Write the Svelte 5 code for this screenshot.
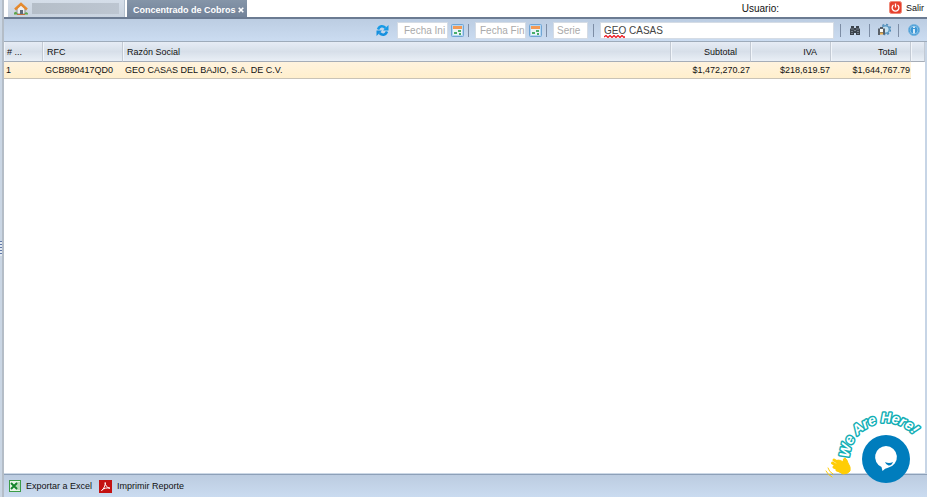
<script>
  let start = $state('');
  let end = $state('');
  let series = $state('');
  let query = $state('GEO CASAS');
  const rows = [
    { n: 1, rfc: 'GCB890417QD0', name: 'GEO CASAS DEL BAJIO, S.A. DE C.V.', subtotal: '$1,472,270.27', iva: '$218,619.57', total: '$1,644,767.79' }
  ];
</script>

{#snippet calendar()}
  <svg width="13" height="13" viewBox="0 0 13 13" aria-hidden="true">
    <rect x=".5" y=".5" width="12" height="12" rx="1" fill="#b5d6f2" stroke="#70a5d4" />
    <path d="M2 3h9v8H2z" fill="#eaf4f8" />
    <path d="M2 2h9v3H2z" fill="#f39a55" />
    <path d="M7 6h3v2H7zM3 8h3v2H3zM8 9h2v2H8z" fill="#48ad69" />
  </svg>
{/snippet}

<div class="app">
  <div class="splitter" role="separator" aria-orientation="vertical"><i></i></div>
  <div class="main">
    <header>
      <nav>
        <a class="tab home" href="#inicio" aria-label="Inicio">
          <svg width="14" height="13" viewBox="0 0 14 13" aria-hidden="true">
            <path d="M3 6v6h8V6L7 3z" fill="#eef0f2" stroke="#858b91" />
            <path d="M6 8h3v4H6z" fill="#5d6b79" />
            <path d="M1 7.500 7 2l6 5.500" fill="none" stroke="#e58a2e" stroke-width="2.400" />
            <path d="M0 11q2-3 4 1.500H0zM10 12.500q2-4 4-1v1z" fill="#5da548" />
            <path d="M3 12.500h8" stroke="#c4703c" />
          </svg>
          <span class="masked"></span>
        </a>
        <div class="tab active">
          <span>Concentrado de Cobros</span>
          <button aria-label="Cerrar">
            <svg width="6" height="6" viewBox="0 0 6 6" aria-hidden="true"><path d="m.7.7 4.600 4.600m0-4.600L.7 5.300" stroke="#fff" stroke-width="1.600" /></svg>
          </button>
        </div>
      </nav>
      <span class="user">Usuario:</span>
      <button class="logout">
        <svg width="13" height="13" viewBox="0 0 13 13" aria-hidden="true">
          <rect x=".5" y=".5" width="12" height="12" rx="2" fill="#e6402d" stroke="#ef8a7a" />
          <path d="M4.500 4a3.400 3.400 0 1 0 4 0M6.500 2.500v4" fill="none" stroke="#fff" stroke-width="1.300" />
        </svg>
        Salir
      </button>
    </header>

    <form class="toolbar" onsubmit={(e) => e.preventDefault()}>
      <button type="button" class="refresh" aria-label="Actualizar">
        <svg width="13" height="13" viewBox="0 0 13 13" aria-hidden="true">
          <path d="M2 5.500C3.500 1.500 7 1.500 9.500 4" fill="none" stroke="#169ae6" stroke-width="2.500" />
          <path d="M12.500 1v5.500H7z" fill="#169ae6" />
          <path d="M11 7.500C9.500 11.500 6 11.500 3.500 9" fill="none" stroke="#1590df" stroke-width="2.500" />
          <path d="M.5 12V6.500H6z" fill="#1590df" />
        </svg>
      </button>
      <input class="date" aria-label="Fecha inicial" placeholder="Fecha Ini" bind:value={start} />
      <button type="button" class="cal" aria-label="Elegir fecha inicial">{@render calendar()}</button>
      <i class="sep"></i>
      <input class="date" aria-label="Fecha final" placeholder="Fecha Fin" bind:value={end} />
      <button type="button" class="cal" aria-label="Elegir fecha final">{@render calendar()}</button>
      <i class="sep"></i>
      <input class="series" aria-label="Serie" placeholder="Serie" bind:value={series} />
      <i class="sep"></i>
      <div class="search">
        <input aria-label="Buscar" bind:value={query} spellcheck="false" />
        <svg class="squiggle" width="21" height="3" viewBox="0 0 21 3" aria-hidden="true"><path d="m0 2 2-1.500 2 2 2-2 2 2 2-2 2 2 2-2 2 2 2-2 2 2 1-1" fill="none" stroke="#ee1c24" stroke-width="1.300" /></svg>
      </div>
      <div class="tools">
        <button aria-label="Buscar">
          <svg width="12" height="12" viewBox="0 0 12 12" aria-hidden="true">
            <path d="M2 2h3v2h2V2h3v2l1 1v6H7V9H5v2H1V5l1-1z" fill="#3b434c" />
            <path d="M2 5h3m2 0h3M2 7.500h2m4 0h2M2 9.500h2m4 0h2M5 6.500h2" stroke="#8f9aa6" stroke-width=".7" />
          </svg>
        </button>
        <button type="button" aria-label="Configurar">
          <svg width="14" height="14" viewBox="0 0 14 14" aria-hidden="true">
            <circle cx="8.500" cy="6.500" r="5" fill="none" stroke="#4e8cb7" stroke-width="1.500" stroke-dasharray="2 1.930" />
            <circle cx="8.500" cy="6.500" r="3.800" fill="#c3e0f1" stroke="#5f9bc4" stroke-width="1.500" />
            <path d="M1 5.500h2V4h3v1.500h2v6H6V10H3v2H1z" fill="#596069" />
            <path d="M3 6h3v3H3z" fill="#f8faf7" />
            <path d="M3 9.500h3v2H3z" fill="#e8ad4e" />
          </svg>
        </button>
        <button type="button" aria-label="Información">
          <svg width="12" height="12" viewBox="0 0 12 12" aria-hidden="true">
            <circle cx="6" cy="6" r="5.500" fill="#3d97d5" stroke="#79b5df" />
            <circle cx="6" cy="6" r="4" fill="none" stroke="#b5daf2" stroke-width=".6" />
            <path d="M6 2.500V4M6 5v4.500" stroke="#fff" stroke-width="1.600" />
          </svg>
        </button>
      </div>
    </form>

    <main>
      <table>
        <colgroup><col class="num" /><col class="money" /><col /><col class="money" /><col class="money" /><col class="money" /><col class="tail" /></colgroup>
        <thead>
          <tr><th># ...</th><th>RFC</th><th>Razón Social</th><th class="r">Subtotal</th><th class="r">IVA</th><th class="r">Total</th><th></th></tr>
        </thead>
        <tbody>
          {#each rows as row}
            <tr><td>{row.n}</td><td>{row.rfc}</td><td>{row.name}</td><td class="r">{row.subtotal}</td><td class="r">{row.iva}</td><td class="r">{row.total}</td><td class="blank"></td></tr>
          {/each}
        </tbody>
      </table>
    </main>

    <footer>
      <button>
        <svg width="12" height="12" viewBox="0 0 12 12" aria-hidden="true">
          <rect x=".5" y=".5" width="11" height="11" fill="#e9f5e8" stroke="#3b9c48" />
          <path d="M7 3h4M7 5h4M7 7h4M7 9h4" stroke="#86bd8a" />
          <path d="m2 3 6 6M8 3 2 9" stroke="#16852d" stroke-width="2" />
        </svg>
        Exportar a Excel
      </button>
      <button>
        <svg width="13" height="13" viewBox="0 0 13 13" aria-hidden="true">
          <path d="M0 0h13v13H0z" fill="#c41212" />
          <path d="M2.500 10.500C5 9 6.500 5 6.200 2.500 6 5 8 8 11 8.200 8 7.500 5 8 2.500 10.500z" fill="none" stroke="#fff" />
        </svg>
        Imprimir Reporte
      </button>
    </footer>
  </div>

  <button class="chat" aria-label="Abrir chat">
    <svg width="104" height="80" viewBox="0 0 104 80" aria-hidden="true">
      <defs><path id="arc" d="M25 54A37 37 0 0 1 99 57" /></defs>
      <text><textPath href="#arc">We Are Here!</textPath></text>
      <g fill="none" stroke="#ffcd05" stroke-linecap="round">
        <path d="M10 56l8 5M8.500 59l8 5M10 63l7 3M13 66l6 2" stroke-width="3" />
        <path d="M14 56q3 0 5 2 0-4 2-4 2 1 3 5 3 4 2 8-2 3-7 3-5-2-7-6z" fill="#ffcd05" />
        <path d="M4 64q1 4 5 6M2 67q2 4 6 6" />
      </g>
      <circle cx="62" cy="55" r="24" fill="#007dbd" />
      <path d="M62 42a11 11 0 0 1 2 21.800q-3 .5-5.500 3.200l-1-4A11 11 0 0 1 62 42z" fill="#fff" />
      <path d="M61 58q4 2 8 0-1.500 4-4.500 3.500Q62 61 61 58z" fill="#007dbd" />
    </svg>
  </button>
</div>

<style>
  :global(body) { margin: 0; }
  .app { display: flex; min-height: 100vh; position: relative; background: #fff; color: #111; font: 9px/12px "Liberation Sans", Arial, sans-serif; }
  button { border: 0; padding: 0; background: none; font: inherit; color: inherit; display: flex; align-items: center; }
  svg { display: block; flex: none; }
  input { box-sizing: border-box; border: 1px solid #d5dce5; background: #fff; font: 10px/12px "Liberation Sans", Arial, sans-serif; color: #444; height: 17px; min-width: 0; outline: 0; }
  input::placeholder { color: #aaa; opacity: 1; }
  .splitter { width: 4px; box-sizing: border-box; flex: none; display: flex; align-items: center; background: #cad6e4; border-right: 2px solid #b4bdc7; }
  .splitter i { width: 2px; height: 15px; background: repeating-linear-gradient(#5f78a8 0 1px, #e4ebf3 1px 3px); }
  .main { flex: 1; min-width: 0; display: flex; flex-direction: column; }
  header { height: 17px; display: flex; align-items: center; padding-right: 3px; border-bottom: 2px solid #6b7b92; }
  nav { flex: 1; display: flex; gap: 2px; padding-left: 4px; }
  .tab { height: 17px; display: flex; align-items: center; box-sizing: border-box; background: linear-gradient(#d5dee9, #c9d3df); }
  .home { width: 117px; padding-left: 6px; gap: 4px; border-right: 1px solid #b2bfcd; }
  .masked { width: 87px; height: 11px; background: linear-gradient(90deg, #b5bec8, #bdc6d1); }
  .active { width: 120px; padding: 2px 3px 0 6px; justify-content: space-between; color: #fff; background: linear-gradient(#8595a8, #72839a); font-weight: bold; white-space: nowrap; }
  .user { font-size: 10px; margin-right: 110px; }
  .logout { gap: 4px; margin-bottom: 2px; }
  .toolbar { height: 22px; display: flex; align-items: center; background: linear-gradient(#bccde2, #cbdcf1); border-bottom: 1px solid #9eabba; padding-right: 7px; }
  .refresh { margin: 0 8px 0 auto; }
  .date { width: 51px; padding: 0 0 0 6px; }
  .date ~ .date { padding-left: 4px; }
  .cal { margin: 0 4px 0 3px; }
  .sep { width: 1px; height: 13px; background: #7d8da5; margin-right: 6px; }
  .series { width: 35px; padding: 0 3px; margin-right: 5px; }
  .search { position: relative; width: 234px; display: flex; }
  .search input { width: 100%; padding: 0 3px; }
  .squiggle { position: absolute; left: 4px; top: 13px; }
  .tools { display: flex; margin-left: 6px; }
  .tools button { width: 29px; height: 13px; justify-content: center; border-left: 1px solid #7d8da5; box-sizing: border-box; }
  .tools button:last-child { width: 22px; justify-content: flex-end; }
  main { flex: 1; border-right: 2px solid #c7d5e6; }
  table { width: 100%; table-layout: fixed; border-collapse: separate; border-spacing: 0; }
  .num { width: 39px; }
  .money { width: 80px; }
  .tail { width: 14px; }
  th, td { box-sizing: border-box; padding: 0; text-align: left; font-weight: normal; white-space: nowrap; }
  th { height: 20px; padding: 0 13px 0 4px; background: linear-gradient(#e6ecf5, #d7dfe9 50%, #e9eff6); border-right: 1px solid #c3cad4; border-bottom: 1px solid #a6adb7; box-shadow: inset 1px 0 #f1f5fa; }
  th:first-child { padding: 0 0 0 3px; }
  td { height: 17px; padding: 0 1px 0 2px; background: linear-gradient(#fff3de, #ffefcd); border-bottom: 1px solid #c9c3b7; }
  .r { text-align: right; }
  .blank { background: none; border: 0; }
  footer { height: 22px; display: flex; align-items: center; gap: 7px; padding-left: 5px; background: linear-gradient(#bccce0, #cadbf0); border-top: 1px solid #8da0b8; box-shadow: 0 -1px #ccd8e6; }
  footer button { gap: 5px; }
  .chat { position: absolute; right: -1px; bottom: 13px; }
  .chat svg { overflow: visible; }
  text { font: italic bold 14px "Liberation Sans", Arial, sans-serif; fill: #fff; stroke: #13aeb5; stroke-width: 3px; stroke-linejoin: round; paint-order: stroke; }
</style>
